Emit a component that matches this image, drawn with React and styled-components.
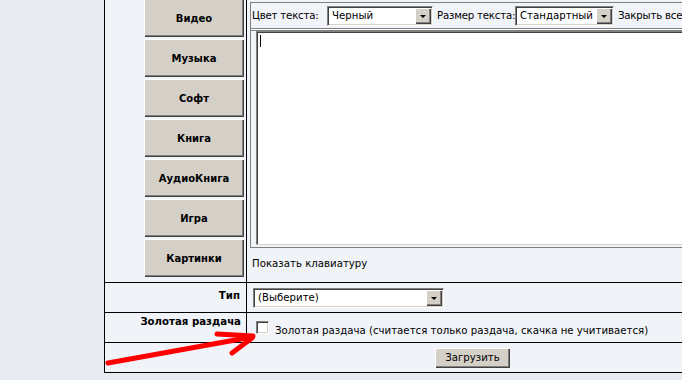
import React from "react";
import styled, { createGlobalStyle } from "styled-components";

const GlobalStyle = createGlobalStyle`
  html, body {
    margin: 0;
    padding: 0;
    background: #e8ebf0;
    overflow: hidden;
  }
  body {
    font-family: "DejaVu Sans", Verdana, sans-serif;
    font-size: 10.2px;
    color: #000;
  }
`;

const categories = ["Видео", "Музыка", "Софт", "Книга", "АудиоКнига", "Игра", "Картинки"];

function Upload() {
  return (
    <Page>
      <Form>
        <Row>
          <Label>
            {categories.map((c) => (
              <CatButton key={c}>{c}</CatButton>
            ))}
          </Label>
          <Value pad="3px 0 0 3px">
            <Editor>
              <Toolbar>
                <ToolLabel width={75}>Цвет текста:</ToolLabel>
                <Select width={106}>Черный</Select>
                <ToolLabel width={78}>Размер текста:</ToolLabel>
                <Select width={99}>Стандартный</Select>
                <ToolLabel>Закрыть все</ToolLabel>
              </Toolbar>
              <TextArea>
                <Caret />
              </TextArea>
            </Editor>
            <Keyboard>Показать клавиатуру</Keyboard>
          </Value>
        </Row>

        <Row>
          <Label pad="7px 6px 0 0">Тип</Label>
          <Value pad="5px 0 0 6px">
            <Select width={191}>(Выберите)</Select>
          </Value>
        </Row>

        <Row>
          <Label pad="3px 5px 0 0">Золотая раздача</Label>
          <Value pad="8px 0 0 9px">
            <Check>
              <Box />
              <span>Золотая раздача (считается только раздача, скачка не учитивается)</span>
            </Check>
          </Value>
        </Row>

        <Row last>
          <Submit>Загрузить</Submit>
        </Row>
      </Form>

      <Arrow viewBox="0 0 682 380">
        <g stroke="#ff0000" strokeWidth="5" strokeLinecap="round" fill="none">
          <line x1="108" y1="363" x2="252" y2="337" />
          <line x1="217" y1="334" x2="253" y2="336" />
          <line x1="252" y1="338" x2="232" y2="353" />
        </g>
      </Arrow>
    </Page>
  );
}

const Page = styled.div`
  position: relative;
  width: 682px;
  height: 380px;
  overflow: hidden;
`;

const Form = styled.div`
  margin: -1px 0 0 104px;
  width: 735px;
  border: 1px solid #000;
  border-top: none;
  background: #f0f3f7;
`;

const Row = styled.div`
  display: flex;
  height: ${(p) => (p.last ? "29px" : "auto")};
  justify-content: ${(p) => (p.last ? "center" : "flex-start")};
  align-items: ${(p) => (p.last ? "center" : "stretch")};
  border-bottom: ${(p) => (p.last ? "none" : "1px solid #000")};
  min-height: 29px;
`;

const Label = styled.div`
  width: 142px;
  flex: none;
  border-right: 1px solid #000;
  display: flex;
  flex-direction: column;
  align-items: flex-end;
  padding: ${(p) => p.pad || "0 2px 0 0"};
  box-sizing: border-box;
  font-weight: bold;
`;

const Value = styled.div`
  flex: 1;
  padding: ${(p) => p.pad || "0"};
  min-width: 0;
`;

const CatButton = styled.div`
  width: 100px;
  height: 38px;
  margin-bottom: 2px;
  box-sizing: border-box;
  background: #d4d0c8;
  box-shadow: inset 1px 1px #ffffff, inset -1px -1px #404040, inset -2px -2px #808080;
  display: flex;
  align-items: center;
  justify-content: center;
  font-weight: bold;
  font-size: 10px;
`;

const Editor = styled.div`
  border: 1px solid #808080;
  border-right: none;
  height: 246px;
  box-sizing: border-box;
  display: flex;
  flex-direction: column;
`;

const Toolbar = styled.div`
  display: flex;
  align-items: center;
  height: 25px;
  padding-left: 1px;
  white-space: nowrap;
  letter-spacing: -0.2px;
  border-bottom: 1px solid #808080;
  box-shadow: 0 1px #ffffff, 0 2px #808080;
  margin-bottom: 2px;
`;

const ToolLabel = styled.span`
  flex: none;
  width: ${(p) => (p.width ? `${p.width}px` : "auto")};
  margin-left: ${(p) => (p.width === 75 ? "0" : "4px")};
`;

const Select = styled.div`
  position: relative;
  width: ${(p) => p.width}px;
  height: 20px;
  box-sizing: border-box;
  background: #fff;
  border-top: 1px solid #808080;
  border-left: 1px solid #808080;
  border-bottom: 1px solid #ffffff;
  border-right: 1px solid #ffffff;
  box-shadow: inset 1px 1px #404040, inset -1px -1px #d4d0c8;
  padding: 0 0 0 4px;
  line-height: 18px;
  letter-spacing: 0;
  flex: none;
  &::after {
    content: "";
    position: absolute;
    right: 1px;
    top: 1px;
    width: 16px;
    height: 16px;
    box-sizing: border-box;
    background: #d4d0c8;
    box-shadow: inset 1px 1px #ffffff, inset -1px -1px #404040, inset -2px -2px #808080;
  }
  &::before {
    content: "";
    position: absolute;
    right: 6px;
    top: 8px;
    z-index: 1;
    border-left: 3px solid transparent;
    border-right: 3px solid transparent;
    border-top: 3px solid #000;
  }
`;

const TextArea = styled.div`
  position: relative;
  margin: 0 0 2px 5px;
  flex: 1;
  background: #fff;
  border-top: 1px solid #808080;
  border-left: 1px solid #808080;
  border-bottom: 1px solid #d4d0c8;
  box-shadow: inset 1px 1px #404040;
`;

const Caret = styled.div`
  position: absolute;
  left: 3px;
  top: 3px;
  width: 1px;
  height: 12px;
  background: #000;
`;

const Keyboard = styled.div`
  padding: 9px 0 12px 2px;
  line-height: 13px;
`;

const Check = styled.label`
  display: flex;
  align-items: flex-start;
  gap: 6px;
  line-height: 13px;
  white-space: nowrap;
  span {
    padding-top: 3px;
  }
`;

const Box = styled.span`
  width: 13px;
  height: 13px;
  box-sizing: border-box;
  background: #fff;
  border-top: 1px solid #808080;
  border-left: 1px solid #808080;
  border-bottom: 1px solid #ffffff;
  border-right: 1px solid #ffffff;
  box-shadow: inset 1px 1px #404040, inset -1px -1px #d4d0c8;
  flex: none;
  padding: 0 !important;
`;

const Submit = styled.div`
  width: 75px;
  height: 20px;
  box-sizing: border-box;
  background: #d4d0c8;
  box-shadow: inset 1px 1px #ffffff, inset -1px -1px #404040, inset -2px -2px #808080;
  display: flex;
  align-items: center;
  justify-content: center;
`;

const Arrow = styled.svg`
  position: absolute;
  left: 0;
  top: 0;
  width: 682px;
  height: 380px;
  pointer-events: none;
`;

export default function App() {
  return (
    <>
      <GlobalStyle />
      <Upload />
    </>
  );
}
